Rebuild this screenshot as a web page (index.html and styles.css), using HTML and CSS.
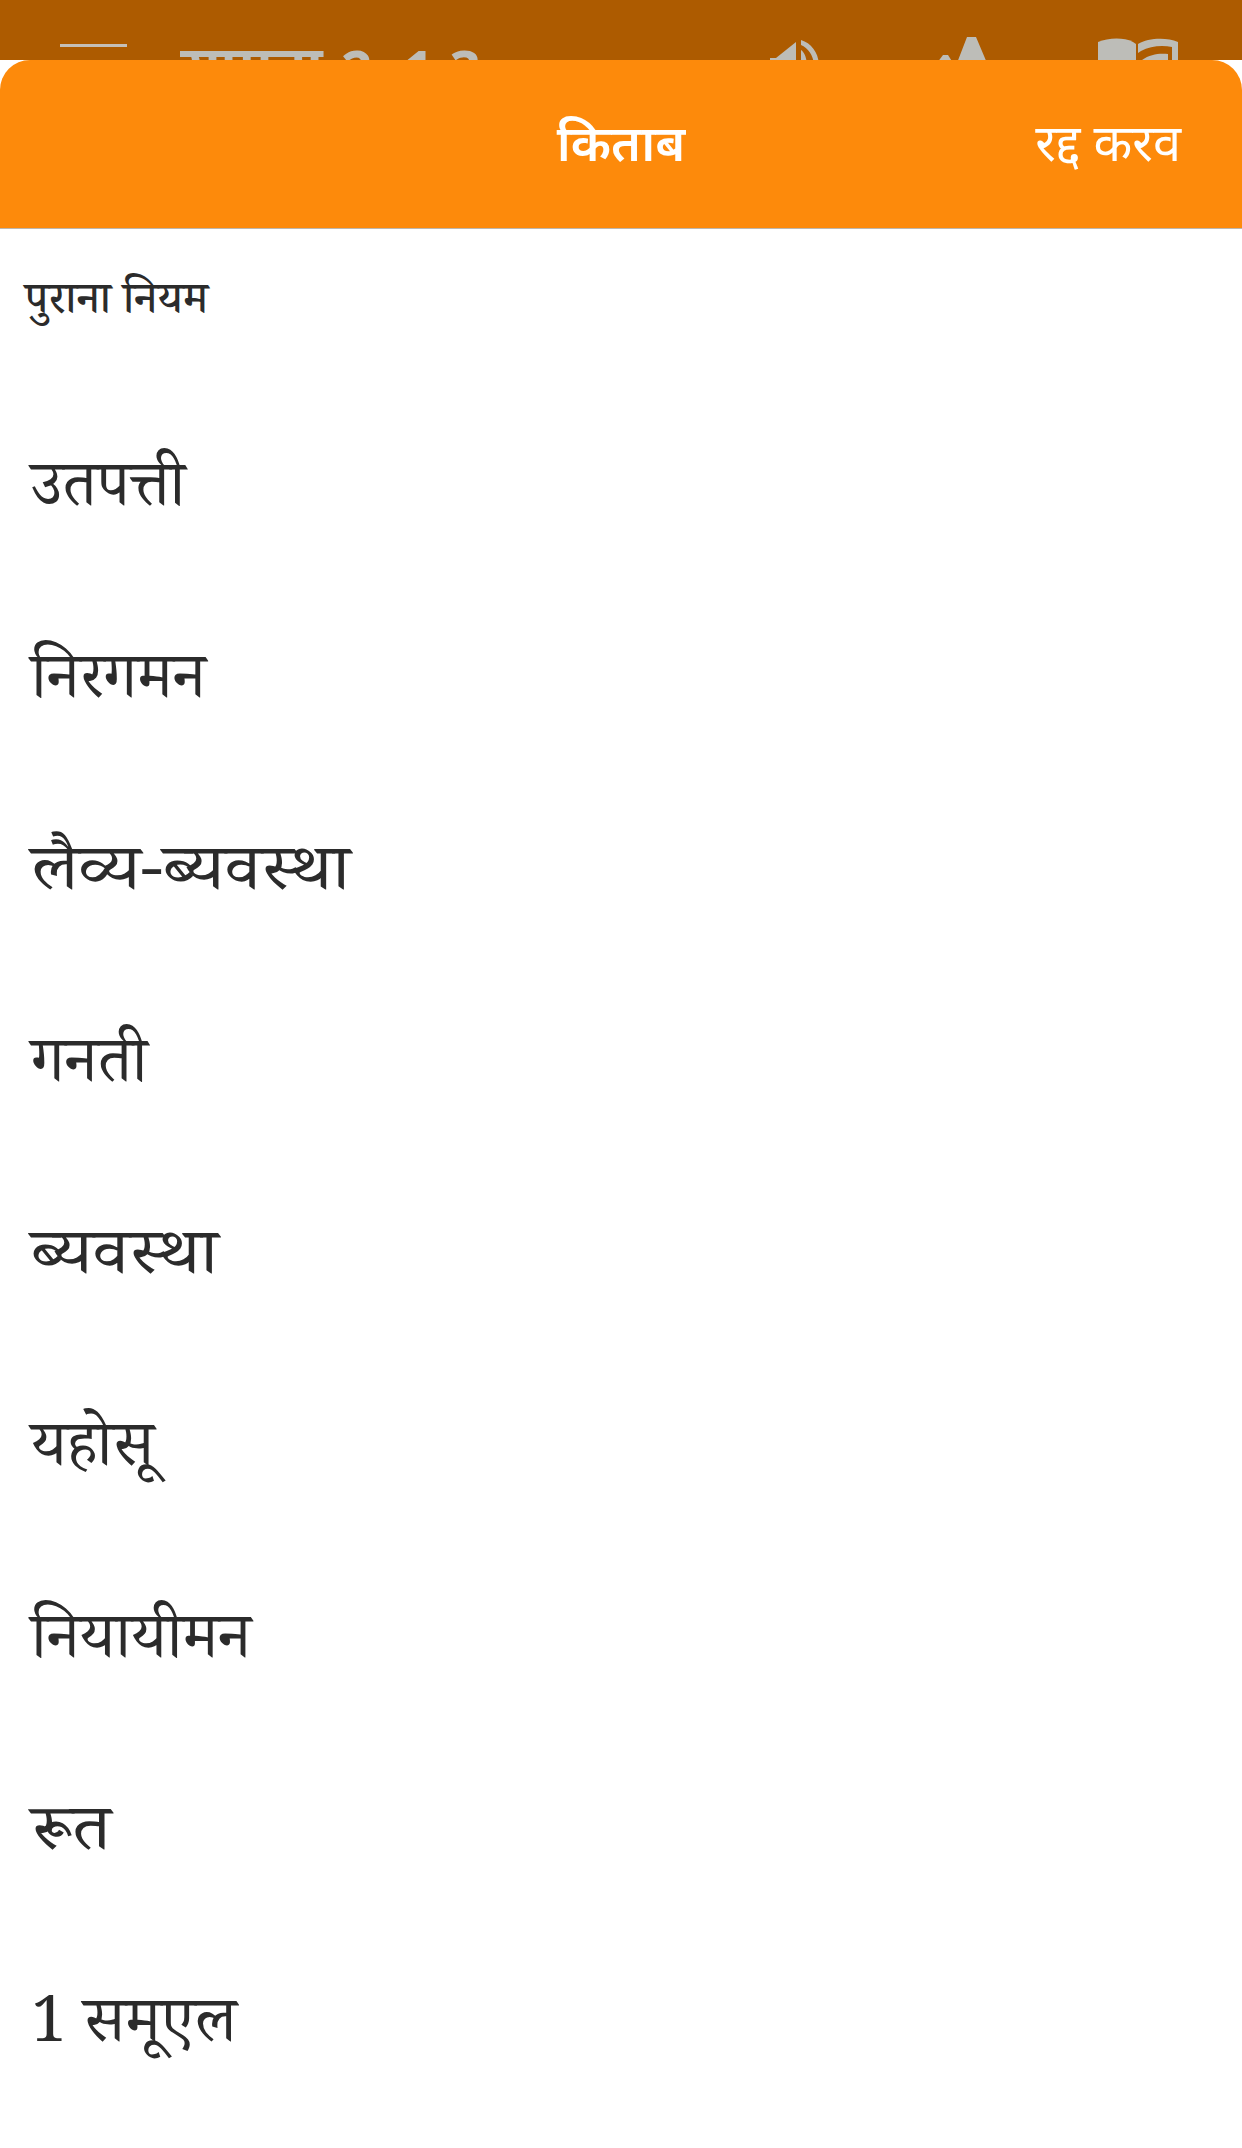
FILE: index.html
```html
<!DOCTYPE html>
<html lang="hi">
<head>
<meta charset="utf-8">
<title>किताब</title>
<link rel="stylesheet" href="styles.css">
</head>
<body>
<div class="app">
  <div class="backdrop">
    <div class="menu-line"></div>
    <div class="back-title">सामना <span class="back-ref">2 1:3</span></div>
    <div class="back-icons">
      <svg class="ic-speaker" width="52" height="24" viewBox="0 0 52 24"><path d="M0 18h6L26 2v22H0z" fill="#bdbdb8"/><path d="M31 0c10 3 17 12 18 24h-5C43 15 38 8 31 5zM31 10c3 2 5 6 6 14h-6z" fill="#bdbdb8"/></svg>
      <svg class="ic-font" width="50" height="26" viewBox="0 0 50 26"><path d="M20 26L30 0h9l11 26zM0 26l6-8h5l5 8z" fill="#bdbdb8"/></svg>
      <svg class="ic-book" width="80" height="26" viewBox="0 0 80 26"><path d="M0 4c10-4 25-5 35 0l3 2v20H0z" fill="#bdbdb8"/><path d="M40 6c10-6 28-7 40-2v22h-6V9c-10-2-22-1-31 4l-3 2z" fill="#bdbdb8"/><path d="M44 22c8-6 18-7 26-6v10H44z" fill="#bdbdb8"/></svg>
    </div>
  </div>
  <div class="sheet">
    <header class="sheet-head">
      <h1 class="sheet-title">किताब</h1>
      <span class="sheet-cancel">रद्द करव</span>
    </header>
    <div class="list">
      <div class="section">पुराना नियम</div>
      <div class="book"><span>उतपत्ती</span></div>
      <div class="book"><span>निरगमन</span></div>
      <div class="book book-wide"><span>लैव्य-ब्यवस्था</span></div>
      <div class="book"><span>गनती</span></div>
      <div class="book book-wide"><span>ब्यवस्था</span></div>
      <div class="book"><span>यहोसू</span></div>
      <div class="book"><span>नियायीमन</span></div>
      <div class="book book-wide"><span>रूत</span></div>
      <div class="book"><span>1 समूएल</span></div>
    </div>
  </div>
</div>
</body>
</html>
```
FILE: styles.css
```css
* { box-sizing: border-box; }
html, body { margin: 0; padding: 0; background: #fff; }
.app { width: 1242px; height: 2148px; overflow: hidden; position: relative; background: #fff; font-family: "Noto Sans", "Noto Sans Devanagari", "Lohit Devanagari", "Noto Serif Devanagari", sans-serif; }
.backdrop { height: 90px; background: #ad5b00; position: relative; overflow: hidden; }
.menu-line { position: absolute; left: 60px; top: 44px; width: 67px; height: 3px; background: #c5c0b8; }
.back-title { position: absolute; left: 180px; top: 26px; font-size: 55px; line-height: 76px; font-weight: 700; color: #bdbdb8; white-space: nowrap; }
.back-ref { margin-left: 4px; word-spacing: 16px; vertical-align: -6px; }
.back-icons svg { position: absolute; }
.ic-speaker { left: 770px; top: 40px; }
.ic-font { left: 937px; top: 37px; }
.ic-book { left: 1098px; top: 38px; }
.sheet { margin-top: -30px; position: relative; background: #fff; }
.sheet-head { height: 169px; background: #fd8a0b; border-radius: 30px 30px 0 0; border-bottom: 1px solid #bdb6ad; position: relative; display: flex; align-items: center; justify-content: center; }
.sheet-title { margin: 0; font-size: 50px; font-weight: 600; line-height: 70px; color: #fff; position: relative; top: -2px; }
.sheet-cancel { position: absolute; right: 61px; top: 50%; transform: translateY(-50%); margin-top: -2px; font-size: 50.5px; line-height: 64px; color: #fff; }
.list { color: #2b2b2b; font-family: "Noto Serif Devanagari", "Noto Sans", serif; }
.section { height: 170px; padding: 48px 0 0 25px; font-size: 44.5px; line-height: 60px; font-weight: 500; }
.book { height: 192px; padding: 0 0 0 31px; display: flex; align-items: center; font-size: 64px; line-height: 80px; }
.book span { display: inline-block; }
.book-wide span { transform: scaleX(1.13); transform-origin: left center; }
```
